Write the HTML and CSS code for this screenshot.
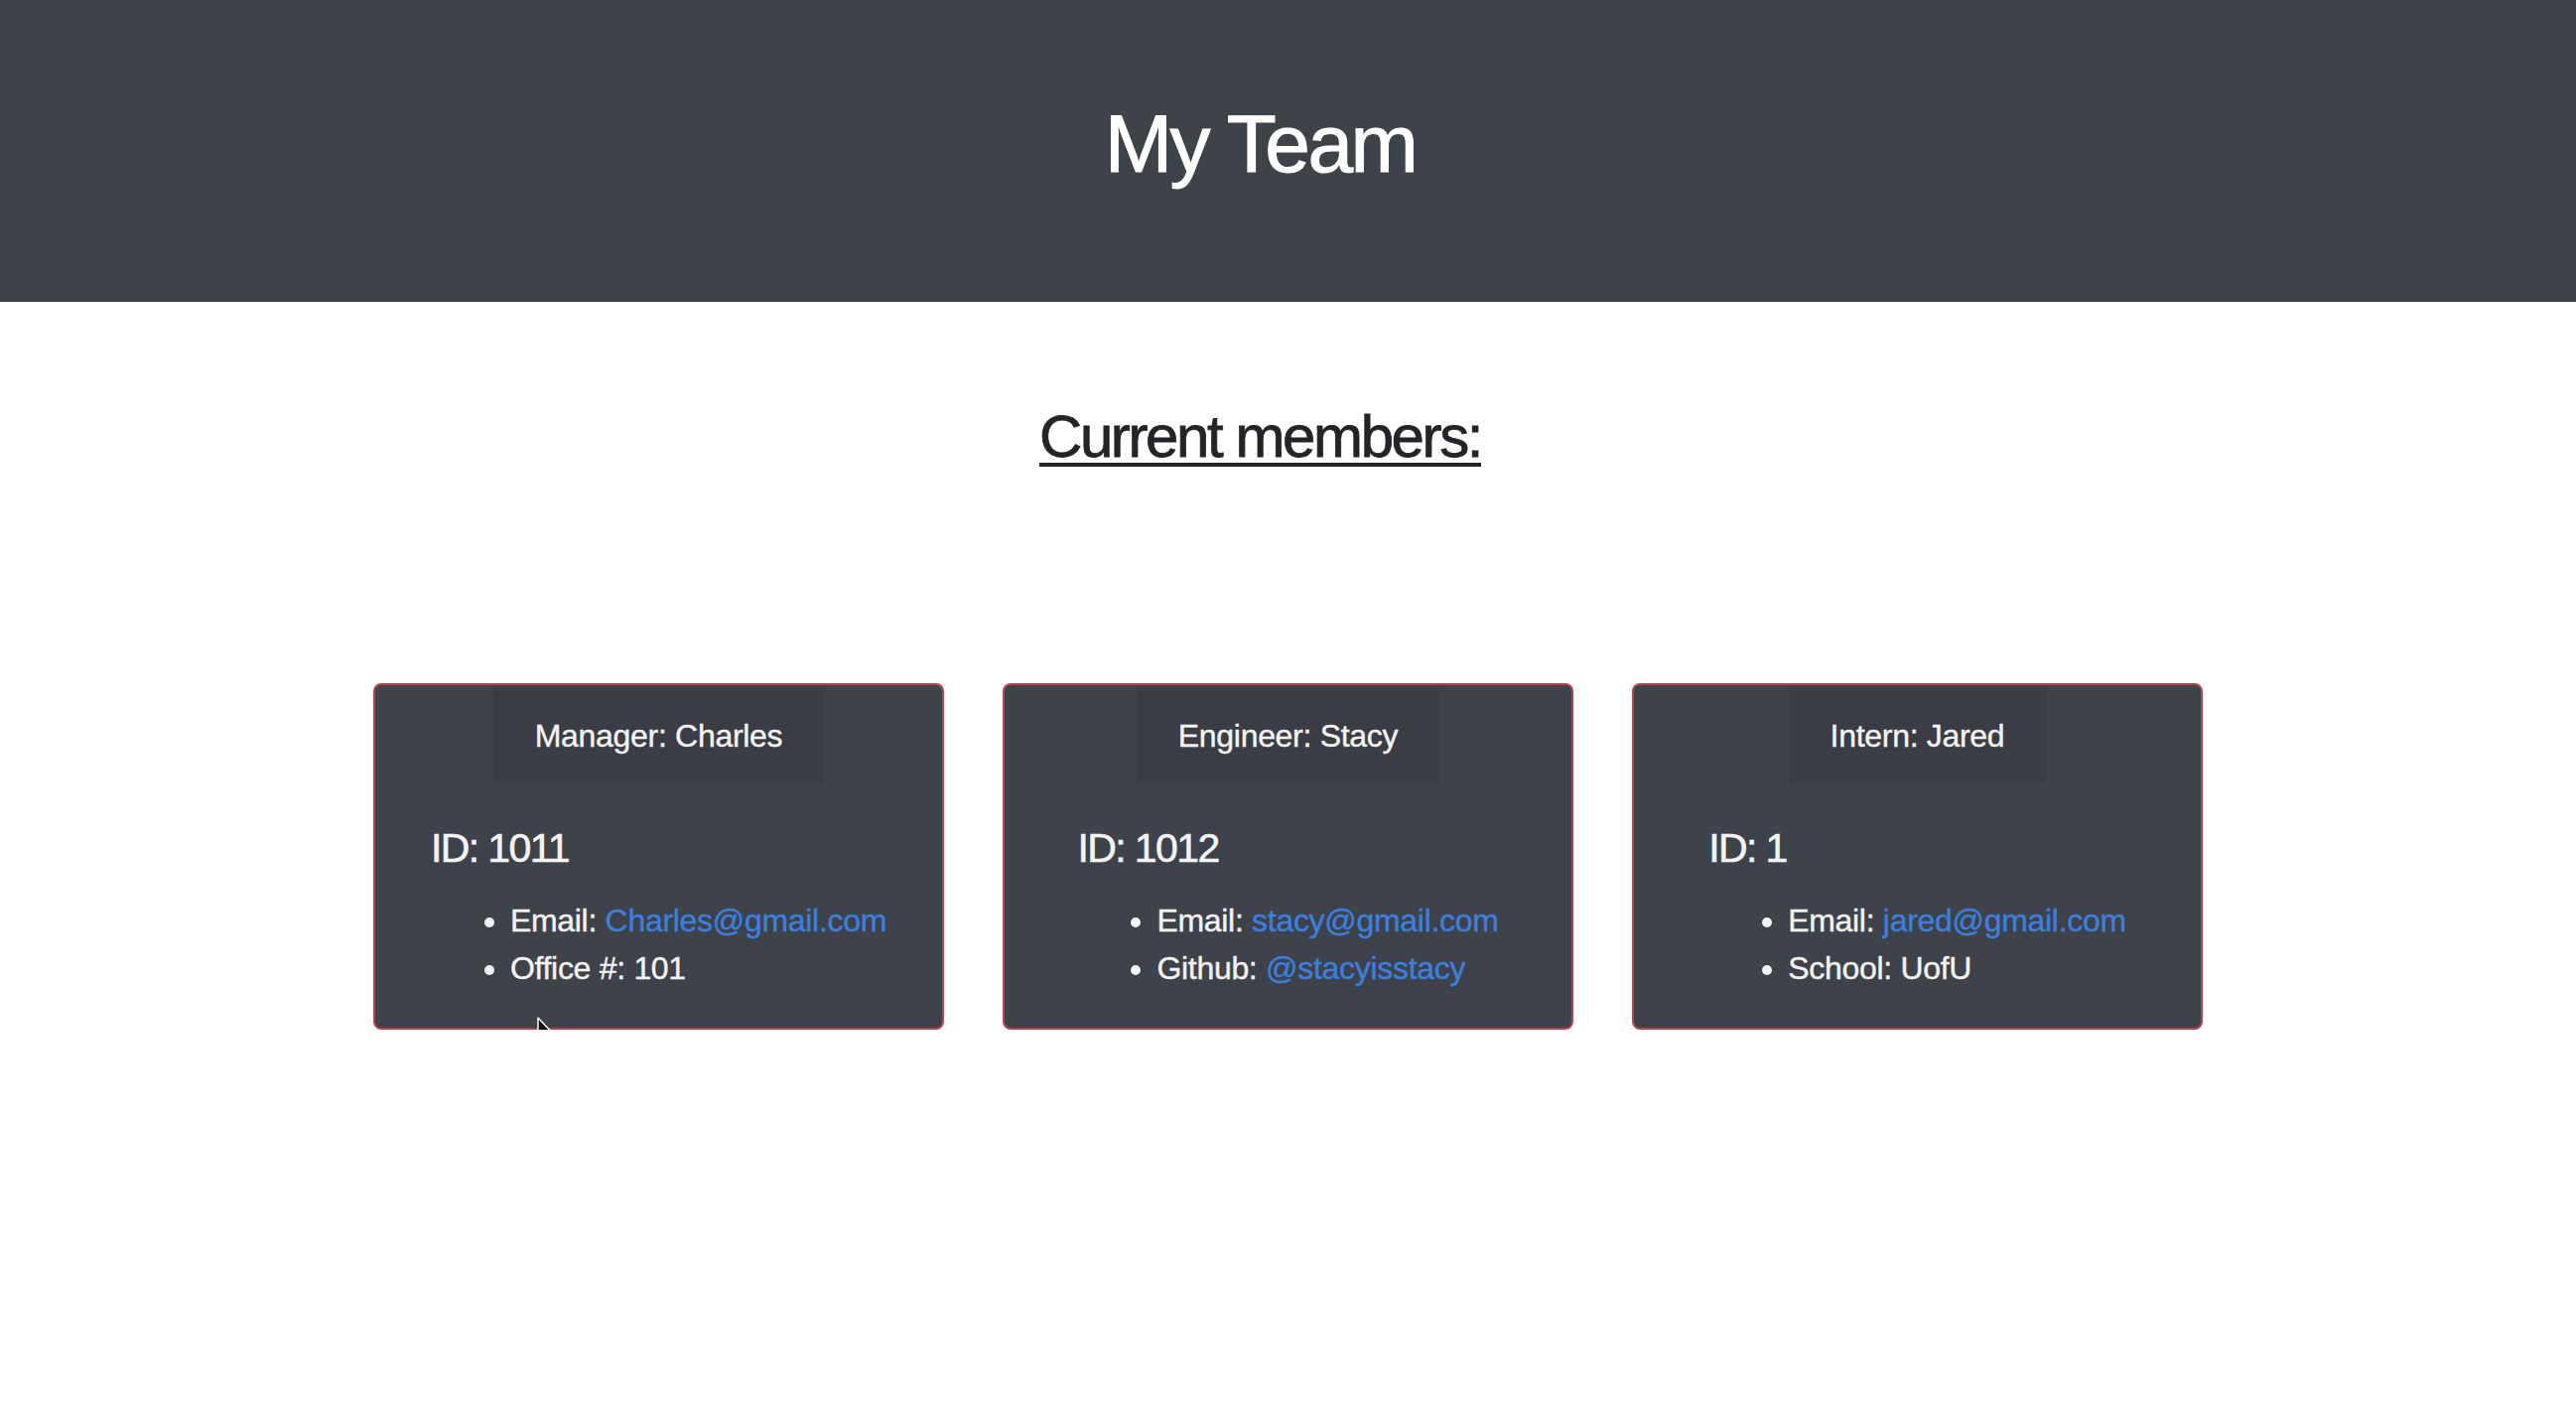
FILE: index.html
```html
<!DOCTYPE html>
<html lang="en">
<head>
<meta charset="utf-8">
<title>My Team</title>
<link rel="stylesheet" href="styles.css">
</head>
<body>
<header class="top-bar">
  <h1 class="title">My Team</h1>
</header>
<main class="content">
  <h2 class="section-title">Current members:</h2>
  <div class="cards">
    <div class="card">
      <div class="card-header">Manager: Charles</div>
      <div class="card-body">
        <h3 class="card-id">ID: 1011</h3>
        <ul class="info">
          <li>Email: <a href="#">Charles@gmail.com</a></li>
          <li>Office #: 101</li>
        </ul>
      </div>
    </div>
    <div class="card">
      <div class="card-header">Engineer: Stacy</div>
      <div class="card-body">
        <h3 class="card-id">ID: 1012</h3>
        <ul class="info">
          <li>Email: <a href="#">stacy@gmail.com</a></li>
          <li>Github: <a href="#">@stacyisstacy</a></li>
        </ul>
      </div>
    </div>
    <div class="card">
      <div class="card-header">Intern: Jared</div>
      <div class="card-body">
        <h3 class="card-id">ID: 1</h3>
        <ul class="info">
          <li>Email: <a href="#">jared@gmail.com</a></li>
          <li>School: UofU</li>
        </ul>
      </div>
    </div>
  </div>
</main>
<svg class="cursor" width="24" height="36" viewBox="0 0 24 36"><polygon points="2,1 2,27 8,21.5 12.5,32 16.5,30.2 12,20 20,20" fill="#111111" stroke="#ffffff" stroke-width="1.5" stroke-linejoin="round"/></svg>
</body>
</html>
```

FILE: styles.css
```css
* { box-sizing: border-box; }

html, body {
  margin: 0;
  padding: 0;
  background: #ffffff;
  font-family: "Liberation Sans", Arial, Helvetica, sans-serif;
}

body {
  position: relative;
}

.top-bar {
  height: 304px;
  background: #3e4249;
  display: flex;
  align-items: center;
  justify-content: center;
  padding-bottom: 14px;
}

.title {
  margin: 0 56px 0 0;
  color: #ffffff;
  font-size: 82px;
  font-weight: 400;
  letter-spacing: -2.5px;
  line-height: 1.2;
  -webkit-text-stroke: 1px #ffffff;
}

.content {
  display: flex;
  flex-direction: column;
  align-items: center;
}

.section-title {
  margin: 100px 56px 0 0;
  font-size: 60px;
  font-weight: 400;
  line-height: 72px;
  letter-spacing: -2.4px;
  color: #222428;
  text-decoration: underline;
  text-decoration-thickness: 4px;
  text-underline-offset: 6px;
  -webkit-text-stroke: 0.8px #222428;
}

.cards {
  margin-top: 212px;
  display: flex;
  justify-content: center;
  gap: 59px;
}

.card {
  width: 575px;
  height: 349px;
  background: #3e4249;
  border: 2px solid #b7444c;
  border-radius: 8px;
  display: flex;
  flex-direction: column;
  align-items: center;
  color: #f3f3f3;
}

.card-header {
  margin-top: 5px;
  padding: 22px 42px 24px;
  background: #3a3d43;
  font-size: 32px;
  line-height: 48px;
  letter-spacing: -0.3px;
  -webkit-text-stroke: 0.4px #f3f3f3;
}

.card-body {
  margin-top: 41px;
  text-align: left;
}

.card-id {
  margin: 0;
  font-size: 41px;
  font-weight: 400;
  line-height: 48px;
  letter-spacing: -1.6px;
  -webkit-text-stroke: 0.6px #f3f3f3;
}

.info {
  margin: 25px 0 0;
  padding-left: 80px;
  font-size: 32px;
  line-height: 48px;
  letter-spacing: -0.3px;
  -webkit-text-stroke: 0.4px #f3f3f3;
}

.info a {
  color: #3c7fdf;
  text-decoration: none;
  -webkit-text-stroke: 0.4px #3c7fdf;
}

.cursor {
  position: absolute;
  left: 540px;
  top: 1024px;
  width: 24px;
  height: 36px;
  display: block;
  overflow: visible;
  z-index: 5;
}
```
